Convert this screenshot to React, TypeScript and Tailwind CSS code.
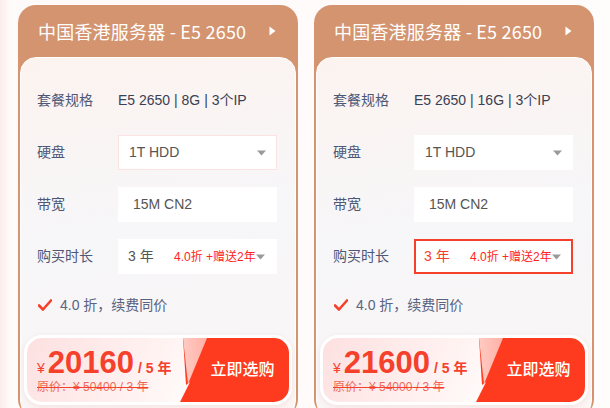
interface Plan {
  spec: string
  price: string
  original: string
  selected: boolean
}

const plans: Plan[] = [
  { spec: 'E5 2650 | 8G | 3个IP', price: '20160', original: '50400', selected: false },
  { spec: 'E5 2650 | 16G | 3个IP', price: '21600', original: '54000', selected: true },
]

const SANS = 'font-["Liberation_Sans","Noto_Sans_CJK_SC",sans-serif]'

function Caret() {
  return (
    <svg width="9" height="6" viewBox="0 0 9 6" className="shrink-0">
      <path d="M0 0.5h9L4.5 5.5z" fill="#9a9a9a" />
    </svg>
  )
}

function Row({ label, children }: { label: string; children: React.ReactNode }) {
  return (
    <div className="flex h-[35px] items-center">
      <div className="w-[81px] shrink-0 text-[14px] text-[#4f5776]">{label}</div>
      {children}
    </div>
  )
}

function PlanCard({ plan, first }: { plan: Plan; first: boolean }) {
  return (
    <div className="flex h-[412px] w-[280px] shrink-0 flex-col rounded-[18px] bg-[#d3946f] px-[2px]">
      <div className='flex h-[52px] items-center justify-between pl-[18px] pr-[20px] font-["Noto_Sans_CJK_SC",sans-serif] text-[18px] tracking-[0.2px] text-white'>
        <span>中国香港服务器 - E5 2650</span>
        <svg width="7" height="10" viewBox="0 0 7 10">
          <path d="M0.5 0.5L6.5 5L0.5 9.5z" fill="#fff" />
        </svg>
      </div>
      <div
        className={`flex flex-1 flex-col rounded-[16px] border border-white bg-[linear-gradient(170deg,#fcf3ef_0%,#f7f6f8_45%,#f8f6f7_75%,#fcf6f5_100%)] px-[16px] pt-[25px] ${SANS}`}
      >
        <div className="flex flex-col gap-[17px]">
          <Row label="套餐规格">
            <span className="text-[14px] text-[#3b4052]">{plan.spec}</span>
          </Row>
          <Row label="硬盘">
            <div
              className={`flex h-full w-[159px] items-center justify-between border bg-white pl-[10px] pr-[10px] text-[14px] text-[#555] ${first ? 'border-[#fbe3e2]' : 'border-white'}`}
            >
              <span>1T HDD</span>
              <Caret />
            </div>
          </Row>
          <Row label="带宽">
            <div className="flex h-full w-[159px] items-center bg-white pl-[15px] text-[14px] text-[#555]">
              15M CN2
            </div>
          </Row>
          <Row label="购买时长">
            <div
              className={`flex h-full w-[159px] items-center border-2 bg-white pl-[8px] pr-[10px] ${plan.selected ? 'border-[#f5402c]' : 'border-white'}`}
            >
              <span className={`w-[46px] text-[14px] ${plan.selected ? 'text-[#f5402c]' : 'text-[#555]'}`}>3 年</span>
              <span className="flex-1 text-[12px] text-[#ff2424]">4.0折 +赠送2年</span>
              <Caret />
            </div>
          </Row>
        </div>

        <div className="mt-[21px] flex h-[20px] items-center gap-[8px] pl-[1px]">
          <svg width="14" height="12" viewBox="0 0 14 12">
            <path d="M1 6.5L5 10.5L13 1.5" fill="none" stroke="#f5402c" strokeWidth="2.6" strokeLinecap="round" strokeLinejoin="round" />
          </svg>
          <span className="text-[14px] text-[#5a6380]">4.0 折，续费同价</span>
        </div>

        <div className="relative -mx-[13px] mt-[20px] h-[70px] overflow-hidden rounded-[18px] border-[3px] border-white bg-[linear-gradient(120deg,#fde0e0_0%,#fff2f1_45%,#ffffff_75%)] shadow-[0_2px_6px_rgba(220,120,110,0.15)]">
          <div className="flex h-full flex-col justify-center pl-[10px]">
            <div className="flex items-baseline text-[#f5402c]">
              <span className="mr-[3px] text-[14px]">¥</span>
              <span className="text-[31px] font-bold leading-[34px]">{plan.price}</span>
              <span className="ml-[4px] text-[14px] font-bold">/ 5 年</span>
            </div>
            <div className="mt-[-1px] text-[12px] leading-[16px] text-[#f06957] line-through decoration-[#f5402c]">
              原价：¥ {plan.original} / 3 年
            </div>
          </div>
          <div className="absolute bottom-0 right-0 top-0 w-[109px] bg-[#ff3b1f] [clip-path:polygon(3px_0,100%_0,100%_100%,0_100%,10px_44px,6px_47px)]">
            <div className="absolute inset-0 bg-[linear-gradient(90deg,rgba(255,255,255,0.75),rgba(255,255,255,0.15))] [clip-path:polygon(3px_0,27px_0,8px_46px)]" />
            <div className="flex h-full items-center justify-center pl-[16px] text-[16px] font-medium text-white">
              立即选购
            </div>
          </div>
        </div>
      </div>
    </div>
  )
}

export default function App() {
  return (
    <div className="h-[408px] w-[610px] overflow-hidden bg-[linear-gradient(90deg,#fcecec_0px,#fffafa_10px,#fffcfc_100%)]">
      <div className="flex gap-[16px] pl-[18px] pt-[5px]">
        {plans.map((p, i) => (
          <PlanCard key={p.price} plan={p} first={i === 0} />
        ))}
      </div>
    </div>
  )
}
